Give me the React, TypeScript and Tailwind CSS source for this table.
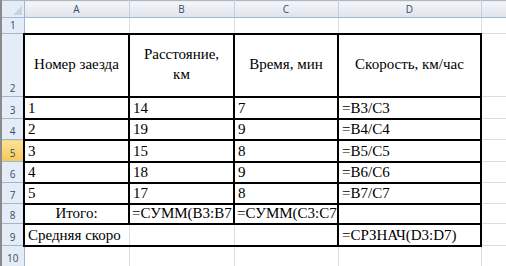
import React from 'react';

const serif = "font-['Liberation_Serif','Times_New_Roman',serif] text-[15px] text-black";
const thick = 'border-2 border-black';

function RowHead({ n, sel }: { n: number; sel?: boolean }) {
  return (
    <td
      className={`border border-[#9eb6ce] border-l-0 p-0 pb-[1px] align-bottom text-center font-['Open_Sans','Liberation_Sans',sans-serif] text-[10px] leading-[13px] ${
        sel ? 'bg-gradient-to-b from-[#fbe29a] to-[#f5c854] text-[#3b4b5f]' : 'bg-[#e4ecf7] text-[#3b4b5f]'
      }`}
    >
      {n}
    </td>
  );
}

function Grid({ children, className = '' }: { children?: React.ReactNode; className?: string }) {
  return (
    <td className={`border border-[#d8dde6] p-0 px-[3px] align-bottom ${className}`}>{children}</td>
  );
}

function Cell({ children, className = '' }: { children?: React.ReactNode; className?: string }) {
  return (
    <td className={`${thick} p-0 px-[3px] pb-[2px] align-bottom whitespace-nowrap overflow-hidden ${serif} leading-[16px] ${className}`}>
      {children}
    </td>
  );
}

const data = [
  ['1', '14', '7', '=B3/C3'],
  ['2', '19', '9', '=B4/C4'],
  ['3', '15', '8', '=B5/C5'],
  ['4', '18', '9', '=B6/C6'],
  ['5', '17', '8', '=B7/C7'],
];

// высоты строк 3..7
const heights = ['h-[22px]', 'h-[21px]', 'h-[22px]', 'h-[21px]', 'h-[21px]'];

export default function App() {
  return (
    <div className="w-[506px] h-[266px] overflow-hidden bg-white border-l-2 border-[#8a8a8a]">
      <table className="table-fixed border-collapse w-[504px]">
        <colgroup>
          <col className="w-[22px]" />
          <col className="w-[105px]" />
          <col className="w-[105px]" />
          <col className="w-[104px]" />
          <col className="w-[143px]" />
          <col className="w-[25px]" />
        </colgroup>
        <tbody>
          {/* заголовки столбцов */}
          <tr className="h-[17px]">
            <td className="relative border border-[#9eb6ce] border-l-0 border-t-[#b5b5b5] bg-[#e4ecf7] p-0">
              <svg className="absolute right-[2px] bottom-[2px]" width="9" height="9" viewBox="0 0 9 9">
                <path d="M9 0 L9 9 L0 9 Z" fill="#c9d2de" />
              </svg>
            </td>
            {['A', 'B', 'C', 'D', ''].map((c, i) => (
              <td
                key={i}
                className="border border-[#c5cfdc] border-b-[#9eb6ce] border-t-[#b5b5b5] bg-gradient-to-b from-[#f3f6fa] to-[#dfe4ec] p-0 text-center font-['Open_Sans','Liberation_Sans',sans-serif] text-[10px] leading-[14px] text-[#3b4b5f]"
              >
                {c}
              </td>
            ))}
          </tr>

          <tr className="h-[16px]">
            <RowHead n={1} />
            <Grid />
            <Grid />
            <Grid />
            <Grid />
            <Grid />
          </tr>

          <tr className="h-[63px]">
            <RowHead n={2} />
            <Cell className="!align-middle text-center">Номер заезда</Cell>
            <Cell className="!align-middle text-center !whitespace-normal !leading-[20px]">
              Расстояние,
              <br />
              км
            </Cell>
            <Cell className="!align-middle text-center">Время, мин</Cell>
            <Cell className="!align-middle text-center">Скорость, км/час</Cell>
            <Grid />
          </tr>

          {data.map((r, i) => (
            <tr key={i} className={heights[i]}>
              <RowHead n={i + 3} sel={i + 3 === 5} />
              {r.map((v, j) => (
                <Cell key={j}>{v}</Cell>
              ))}
              <Grid />
            </tr>
          ))}

          <tr className="h-[20px]">
            <RowHead n={8} />
            <Cell className="text-center">Итого:</Cell>
            <Cell className="!pl-[2px]">=СУММ(B3:B7</Cell>
            <Cell className="!pl-[2px]">=СУММ(C3:C7</Cell>
            <Cell />
            <Grid />
          </tr>

          <tr className="h-[22px]">
            <RowHead n={9} />
            <td className={`border border-[#d8dde6] border-l-2 border-l-black border-y-2 border-y-black p-0 px-[3px] pb-[2px] align-bottom whitespace-nowrap overflow-hidden ${serif} leading-[16px]`}>
              Средняя скоро
            </td>
            <td className="border border-[#d8dde6] border-y-2 border-y-black p-0" />
            <td className="border border-[#d8dde6] border-y-2 border-y-black p-0" />
            <Cell>=СРЗНАЧ(D3:D7)</Cell>
            <Grid />
          </tr>

          <tr className="h-[21px]">
            <RowHead n={10} />
            <Grid />
            <Grid />
            <Grid />
            <Grid />
            <Grid />
          </tr>
        </tbody>
      </table>
    </div>
  );
}
